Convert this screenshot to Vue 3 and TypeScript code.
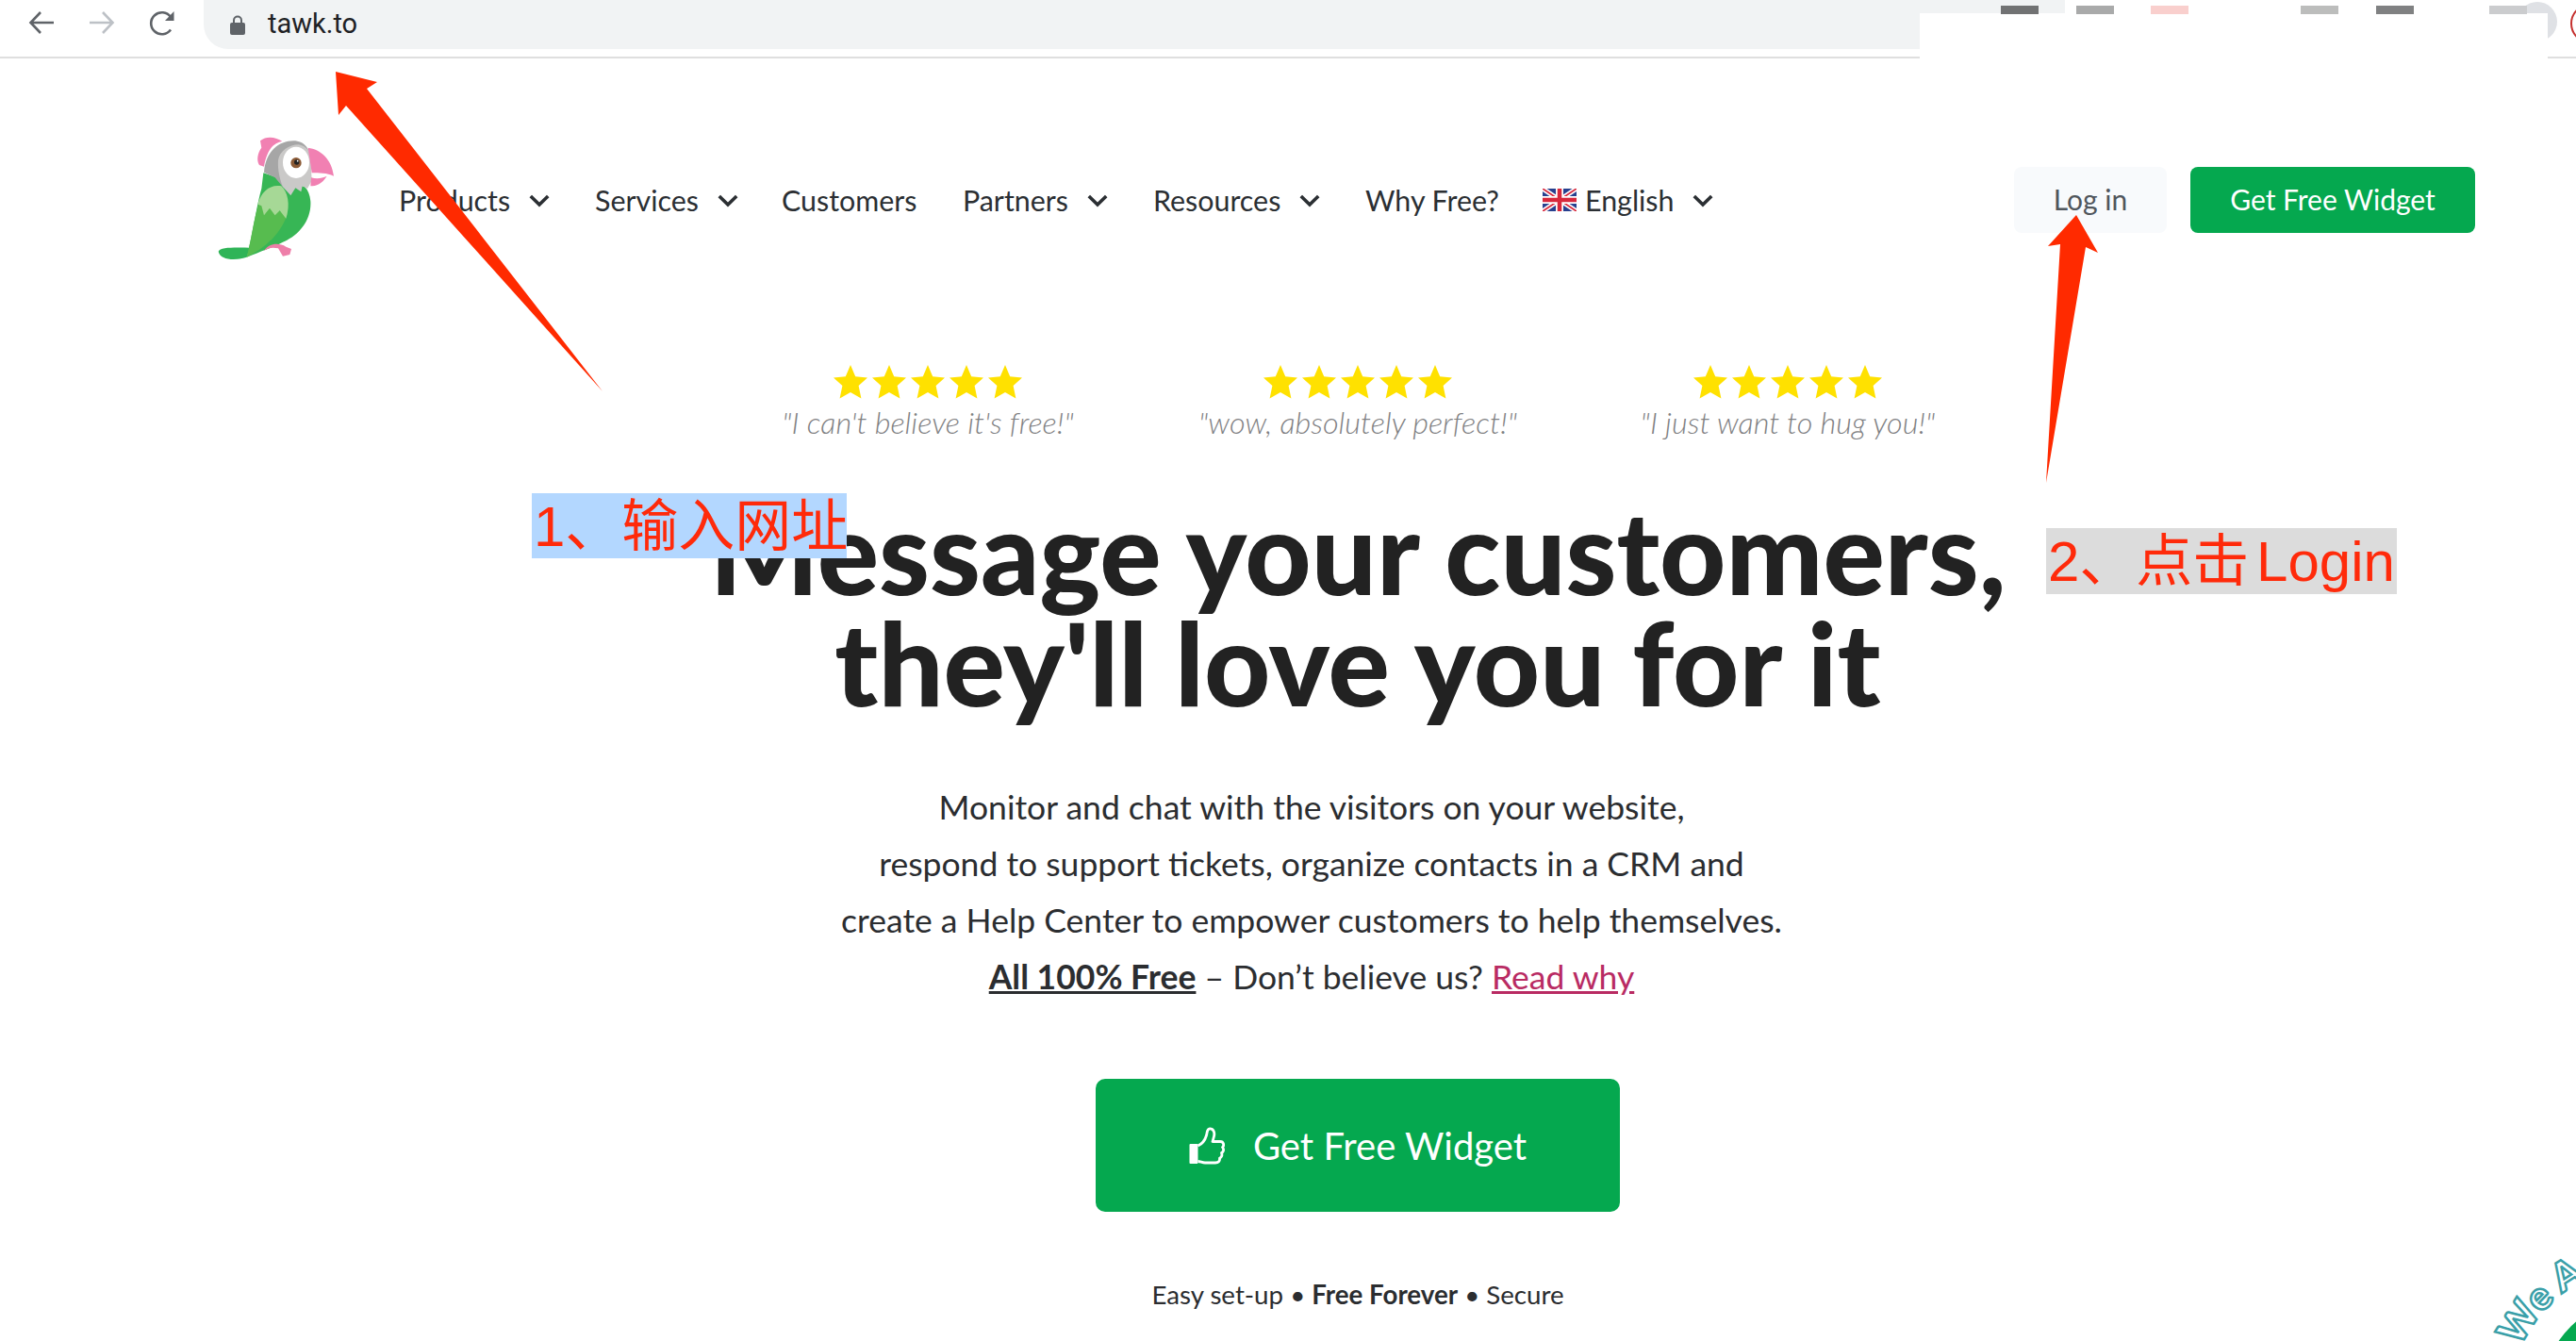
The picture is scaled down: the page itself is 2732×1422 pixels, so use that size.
<script setup lang="ts">
interface NavItem { label: string; width: number; chevron: boolean; flag?: boolean }

const navItems: NavItem[] = [
  { label: 'Products', width: 208, chevron: true },
  { label: 'Services', width: 198, chevron: true },
  { label: 'Customers', width: 192, chevron: false },
  { label: 'Partners', width: 202, chevron: true },
  { label: 'Resources', width: 225, chevron: true },
  { label: 'Why Free?', width: 188, chevron: false },
  { label: 'English', width: 190, chevron: true, flag: true },
]

const quotes: string[] = [
  '"I can\'t believe it\'s free!"',
  '"wow, absolutely perfect!"',
  '"I just want to hug you!"',
]

const bars: { color: string; gap: number }[] = [
  { color: '#717273', gap: 40 },
  { color: '#a9aaaa', gap: 39 },
  { color: '#f9cfcd', gap: 119 },
  { color: '#bcbdbc', gap: 40 },
  { color: '#808182', gap: 80 },
  { color: '#cbccce', gap: 0 },
]

const starPath = 'M18 0 L23.200 12.300 L36 13.400 L26.600 22 L29.400 35.500 L18 29 L6.600 35.500 L9.400 22 L0 13.400 L12.800 12.300 Z'
</script>

<template>
  <div class="page">
    <div class="chrome">
      <svg class="tool" width="28" height="26" viewBox="0 0 28 26"><path d="M27 13H3M13 2 2.500 13 13 24" fill="none" stroke="#5f6368" stroke-width="2.600"/></svg>
      <svg class="tool forward" width="28" height="26" viewBox="0 0 28 26"><path d="M1 13H25M15 2 25.500 13 15 24" fill="none" stroke="#bdc1c6" stroke-width="2.600"/></svg>
      <svg class="tool reload" width="30" height="28" viewBox="0 0 30 28"><path d="M24 20.500A11.500 11.500 0 1 1 24 7" fill="none" stroke="#5f6368" stroke-width="2.600"/><path d="M27.500 1V11H18Z" fill="#5f6368"/></svg>
      <div class="omnibox">
        <svg width="16" height="21" viewBox="0 0 16 21"><path d="M4 9V5.500a4 4 0 0 1 8 0V9" fill="none" stroke="#5f6368" stroke-width="2"/><rect y="8" width="16" height="13" rx="2" fill="#5f6368"/></svg>
        <span class="url">tawk.to</span>
      </div>
    </div>

    <header class="site-head">
      <svg class="logo" width="180" height="170" viewBox="0 0 540 510">
        <path d="M95 440C100 425 150 428 195 428L185 458C150 470 100 468 95 440Z" fill="#2fb457"/>
        <path d="M238 190 232 240C215 300 205 380 185 458 230 440 270 425 300 410 350 390 392 340 388 280 386 260 380 245 370 235Z" fill="#37b655"/>
        <path d="M222 290C205 350 200 400 185 458 240 430 290 390 315 320Z" fill="#57bc4f"/>
        <path d="M220 290C230 250 260 225 295 232 315 250 325 290 310 335L290 310 275 325 258 302 240 325 232 295Z" fill="#a6d896"/>
        <path d="M240 188C245 120 290 85 340 88 365 92 380 105 385 130L390 215 300 235 275 205Z" fill="#a6a6a6"/>
        <path d="M285 150C290 120 320 100 350 100 375 105 385 120 388 140L392 215 378 240 362 232 358 250 340 238 325 262 300 235C290 210 283 180 285 150Z" fill="#cac9c8"/>
        <ellipse cx="342" cy="157" rx="42" ry="50" fill="#fff"/>
        <circle cx="342" cy="158" r="17" fill="#8b5a36"/>
        <circle cx="344" cy="156" r="8" fill="#222"/>
        <circle cx="347" cy="152" r="2.500" fill="#fff"/>
        <path d="M228 88C250 70 280 78 298 90 270 95 250 115 240 170L225 165C215 150 220 125 232 110Z" fill="#f180b2"/>
        <path d="M380 110C420 115 455 145 462 200 440 190 415 190 392 190Z" fill="#f180b2"/>
        <path d="M390 205C410 210 425 207 440 200 425 225 405 232 388 232Z" fill="#f180b2"/>
        <path d="M240 438C255 415 285 410 310 425L327 432 322 450 300 455 285 430C265 425 250 430 240 438Z" fill="#ee7fa9"/>
      </svg>

      <nav class="nav">
        <a v-for="item in navItems" :key="item.label" class="nav-link" :style="{ width: item.width + 'px' }">
          <svg v-if="item.flag" class="flag" width="36" height="24" viewBox="0 0 36 24">
            <rect width="36" height="24" rx="3" fill="#27408f"/>
            <path d="M0 0 36 24M36 0 0 24" stroke="#fff" stroke-width="5"/>
            <path d="M0 0 36 24M36 0 0 24" stroke="#d8283c" stroke-width="1.800"/>
            <path d="M18 0V24M0 12H36" stroke="#fff" stroke-width="8"/>
            <path d="M18 0V24M0 12H36" stroke="#d8283c" stroke-width="4.500"/>
          </svg>
          <span>{{ item.label }}</span>
          <svg v-if="item.chevron" class="chev" width="22" height="14" viewBox="0 0 22 14"><path d="M1.800 2 11 11 20.200 2" fill="none" stroke="#2b2f33" stroke-width="3.600"/></svg>
        </a>
      </nav>

      <div class="head-actions">
        <a class="login">Log in</a>
        <a class="widget-small">Get Free Widget</a>
      </div>
    </header>

    <main class="hero">
      <div class="quotes">
        <div v-for="q in quotes" :key="q" class="quote">
          <div class="stars">
            <svg v-for="n in 5" :key="n" width="36" height="36" viewBox="0 0 36 36"><path :d="starPath" fill="#ffe100"/></svg>
          </div>
          <div class="quote-text">{{ q }}</div>
        </div>
      </div>

      <h1 class="title">Message your customers,<br>they'll love you for it</h1>

      <div class="lead">
        <p>Monitor and chat with the visitors on your website,</p>
        <p>respond to support tickets, organize contacts in a CRM and</p>
        <p>create a Help Center to empower customers to help themselves.</p>
        <p><b class="free">All 100% Free</b> – Don’t believe us? <a class="why">Read why</a></p>
      </div>

      <a class="cta">
        <svg width="38" height="40" viewBox="0 0 38 40">
          <rect x="0.500" y="18" width="9" height="21" rx="1" fill="#fff"/>
          <path d="M9.500 20C14 18 17 14 18.500 9 19.500 5 19 2 22 1.800 26 1.600 27.500 6 26.500 10L25 15.500H33C37 15.500 37.500 20 35.500 21.500 37.500 24 36.500 26.500 34.500 27.500 35.500 30 34.500 32.500 32.500 33 33 36.500 31 38 28 38H17C14 38 12 36.500 9.500 36.500" fill="none" stroke="#fff" stroke-width="2.800" stroke-linejoin="round"/>
        </svg>
        <span>Get Free Widget</span>
      </a>

      <div class="fineprint">Easy set-up • <b>Free Forever</b> • Secure</div>
    </main>

    <!-- stuff painted on top of the screenshot -->
    <div class="cover-avatar"></div>
    <div class="cover-red"></div>
    <div class="cover"></div>
    <div class="cover-bars">
      <i v-for="(b, i) in bars" :key="i" :style="{ background: b.color, marginRight: b.gap + 'px' }"></i>
    </div>

    <svg class="arrows" width="2732" height="1422" viewBox="0 0 2732 1422">
      <polygon points="639,415 389,94 400,87 356,76 359,122 367,112" fill="#ff2a00"/>
      <polygon points="2170,512 2212,262 2225,268 2202,228 2172,261 2185,259" fill="#ff2a00"/>
    </svg>

    <div class="note note-one">1、输入网址</div>
    <div class="note note-two">2、点击 Login</div>

    <svg class="badge" width="132" height="122" viewBox="2600 1300 132 122">
      <circle cx="2810" cy="1490" r="118" fill="#05a84f"/>
      <path id="badge-arc" d="M2676 1557A150 150 0 0 1 2810 1340" fill="none"/>
      <text class="badge-text"><textPath href="#badge-arc" startOffset="132">We A</textPath></text>
    </svg>
  </div>
</template>

<style scoped>
.page {
  position: relative;
  width: 2732px;
  height: 1422px;
  overflow: hidden;
  background: #fff;
  font-family: Lato, "Liberation Sans", sans-serif;
  color: #2b2f33;
}
.chrome {
  height: 60px;
  border-bottom: 2px solid #dfdfdf;
  display: flex;
  align-items: flex-start;
  padding-left: 30px;
  box-sizing: content-box;
}
.tool { margin-top: 11px; }
.forward { margin-left: 36px; }
.reload { margin-left: 35px; margin-top: 11px; }
.omnibox {
  margin-left: 29px;
  width: 1974px;
  height: 52px;
  background: #f1f3f4;
  border-radius: 0 0 26px 26px;
  display: flex;
  align-items: center;
  padding-left: 28px;
  box-sizing: border-box;
}
.url {
  margin-left: 24px;
  margin-bottom: 2px;
  font-family: Roboto, sans-serif;
  font-size: 29px;
  color: #202124;
}
.site-head {
  height: 300px;
  display: flex;
  align-items: center;
  padding-left: 200px;
  padding-right: 107px;
}
.logo { margin-bottom: 14px; flex: none; }
.nav {
  display: flex;
  margin-left: 43px;
  font-size: 30.400px;
}
.nav-link {
  display: flex;
  align-items: center;
  flex: none;
}
.flag { margin-right: 9px; }
.chev { margin-left: 20px; margin-top: 1px; }
.head-actions {
  display: flex;
  margin-left: auto;
  font-size: 30px;
}
.login {
  width: 162px;
  height: 70px;
  line-height: 68px;
  text-align: center;
  background: #f8fafc;
  border-radius: 8px;
  color: #50565c;
}
.widget-small {
  margin-left: 25px;
  width: 302px;
  height: 70px;
  line-height: 68px;
  text-align: center;
  background: #05a84f;
  color: #fff;
  border-radius: 8px;
}
.hero {
  display: flex;
  flex-direction: column;
  align-items: center;
  padding-left: 148px;
}
.quotes {
  display: flex;
  margin-top: 25px;
}
.quote {
  width: 456px;
  display: flex;
  flex-direction: column;
  align-items: center;
}
.stars { display: flex; gap: 5px; }
.quote-text {
  margin-top: 5px;
  font-size: 32.400px;
  line-height: 40px;
  font-style: italic;
  font-weight: 300;
  color: #7f8183;
}
.title {
  margin: 57px 0 0;
  font-size: 122px;
  line-height: 118px;
  font-weight: 900;
  text-align: center;
  color: #222;
}
.lead {
  margin-top: 65px;
  margin-right: 98px;
  font-size: 35.500px;
  line-height: 60px;
  text-align: center;
  color: #2b2d30;
}
.lead p { margin: 0; }
.free { text-decoration: underline; }
.why { color: #b92b63; text-decoration: underline; }
.cta {
  margin-top: 78px;
  width: 556px;
  height: 141px;
  background: #05a84f;
  border-radius: 10px;
  color: #fff;
  font-size: 40px;
  display: flex;
  align-items: center;
  justify-content: center;
  gap: 30px;
}
.fineprint {
  margin-top: 70px;
  font-size: 27.700px;
  line-height: 36px;
  color: #2b2d30;
}
.cover {
  position: absolute;
  left: 2036px;
  top: 14px;
  width: 666px;
  height: 50px;
  background: #fff;
}
.cover-avatar {
  position: absolute;
  left: 2670px;
  top: 2px;
  width: 42px;
  height: 42px;
  border-radius: 50%;
  background: #dfe1e5;
}
.cover-red {
  position: absolute;
  left: 2726px;
  top: 4px;
  width: 38px;
  height: 38px;
  border-radius: 50%;
  border: 2px solid #c5302e;
}
.cover-bars {
  position: absolute;
  left: 2122px;
  top: 6px;
  display: flex;
}
.cover-bars i {
  display: block;
  width: 40px;
  height: 9px;
}
.arrows {
  position: absolute;
  left: 0;
  top: 0;
}
.note {
  position: absolute;
  color: #ff2a0a;
  font-family: "Liberation Sans", "Noto Sans CJK SC", sans-serif;
  font-size: 60px;
  line-height: 72px;
  white-space: nowrap;
  box-sizing: border-box;
  padding-left: 2px;
  word-spacing: -9px;
}
.note-one {
  left: 564px;
  top: 523px;
  width: 334px;
  height: 69px;
  background: #b3d7ff;
}
.note-two {
  left: 2170px;
  top: 560px;
  width: 372px;
  height: 70px;
  background: #dcdcdc;
}
.badge {
  position: absolute;
  left: 2600px;
  top: 1300px;
}
.badge-text {
  font-family: Lato, sans-serif;
  font-size: 42px;
  font-weight: 900;
  fill: #fff;
  stroke: #3a9fa8;
  stroke-width: 2.500px;
}
</style>
